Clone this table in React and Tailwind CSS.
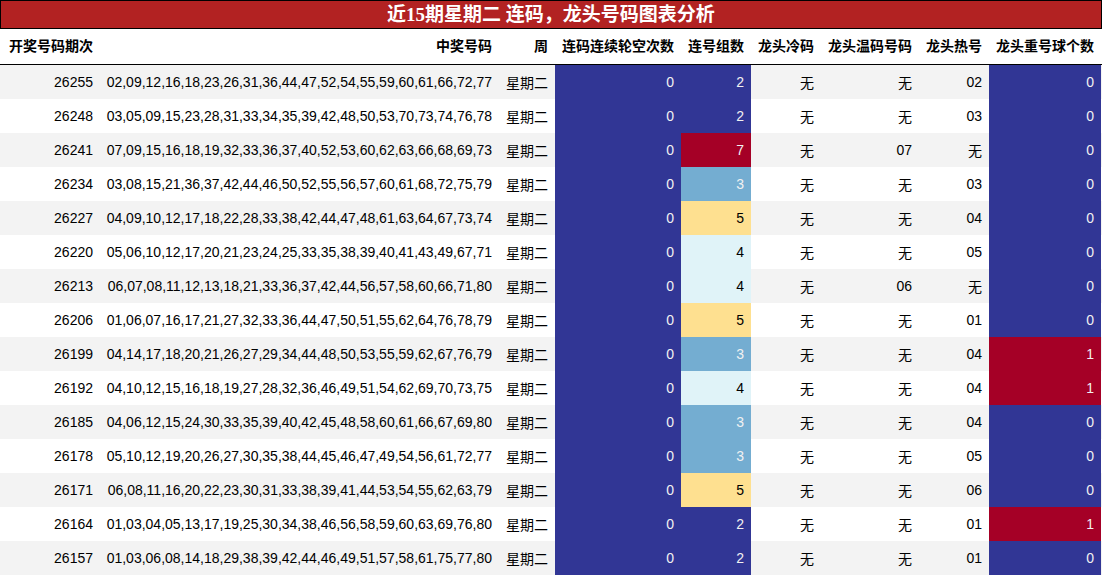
import React from "react";

const rows = [
  ["26255", "02,09,12,16,18,23,26,31,36,44,47,52,54,55,59,60,61,66,72,77", 0, 2, "无", "无", "02", 0],
  ["26248", "03,05,09,15,23,28,31,33,34,35,39,42,48,50,53,70,73,74,76,78", 0, 2, "无", "无", "03", 0],
  ["26241", "07,09,15,16,18,19,32,33,36,37,40,52,53,60,62,63,66,68,69,73", 0, 7, "无", "07", "无", 0],
  ["26234", "03,08,15,21,36,37,42,44,46,50,52,55,56,57,60,61,68,72,75,79", 0, 3, "无", "无", "03", 0],
  ["26227", "04,09,10,12,17,18,22,28,33,38,42,44,47,48,61,63,64,67,73,74", 0, 5, "无", "无", "04", 0],
  ["26220", "05,06,10,12,17,20,21,23,24,25,33,35,38,39,40,41,43,49,67,71", 0, 4, "无", "无", "05", 0],
  ["26213", "06,07,08,11,12,13,18,21,33,36,37,42,44,56,57,58,60,66,71,80", 0, 4, "无", "06", "无", 0],
  ["26206", "01,06,07,16,17,21,27,32,33,36,44,47,50,51,55,62,64,76,78,79", 0, 5, "无", "无", "01", 0],
  ["26199", "04,14,17,18,20,21,26,27,29,34,44,48,50,53,55,59,62,67,76,79", 0, 3, "无", "无", "04", 1],
  ["26192", "04,10,12,15,16,18,19,27,28,32,36,46,49,51,54,62,69,70,73,75", 0, 4, "无", "无", "04", 1],
  ["26185", "04,06,12,15,24,30,33,35,39,40,42,45,48,58,60,61,66,67,69,80", 0, 3, "无", "无", "04", 0],
  ["26178", "05,10,12,19,20,26,27,30,35,38,44,45,46,47,49,54,56,61,72,77", 0, 3, "无", "无", "05", 0],
  ["26171", "06,08,11,16,20,22,23,30,31,33,38,39,41,44,53,54,55,62,63,79", 0, 5, "无", "无", "06", 0],
  ["26164", "01,03,04,05,13,17,19,25,30,34,38,46,56,58,59,60,63,69,76,80", 0, 2, "无", "无", "01", 1],
  ["26157", "01,03,06,08,14,18,29,38,39,42,44,46,49,51,57,58,61,75,77,80", 0, 2, "无", "无", "01", 0],
];

const lianhaoStyle = {
  2: "bg-[#313695] text-[#f1f1f1]",
  3: "bg-[#74add1] text-[#f1f1f1]",
  4: "bg-[#e0f3f8] text-black",
  5: "bg-[#fee090] text-black",
  7: "bg-[#a50026] text-[#f1f1f1]",
};

const repeatStyle = {
  0: "bg-[#313695] text-[#f1f1f1]",
  1: "bg-[#a50026] text-[#f1f1f1]",
};

const grid =
  "grid grid-cols-[100px_399px_56px_126px_70px_70px_98px_70px_112px]";

const headers = [
  "开奖号码期次",
  "中奖号码",
  "周",
  "连码连续轮空次数",
  "连号组数",
  "龙头冷码",
  "龙头温码号码",
  "龙头热号",
  "龙头重号球个数",
];

function Cell({ children, className = "" }) {
  return (
    <div className={`flex items-center justify-end px-[7px] whitespace-nowrap ${className}`}>
      {children}
    </div>
  );
}

export default function App() {
  return (
    <div
      className="w-[1102px] h-[576px] overflow-hidden bg-white text-black"
      style={{ fontFamily: '"Liberation Sans", "Noto Sans CJK SC", sans-serif' }}
    >
      <div
        className="h-[29px] border border-black bg-[#b22222] flex items-center justify-center text-white font-bold text-[19px] leading-none"
        style={{ fontFamily: '"Liberation Serif", "Noto Sans CJK SC", serif' }}
      >
        近15期星期二 连码，龙头号码图表分析
      </div>
      <div className={`${grid} h-[36px] border-b border-black text-[14px] font-bold`}>
        {headers.map((h) => (
          <Cell key={h}>{h}</Cell>
        ))}
      </div>
      {rows.map((r, i) => (
        <div
          key={r[0]}
          className={`${grid} h-[34px] text-[14px] ${i % 2 === 0 ? "bg-[#f3f3f3]" : "bg-white"}`}
        >
          <Cell>{r[0]}</Cell>
          <Cell>{r[1]}</Cell>
          <Cell className="pt-[2px]">星期二</Cell>
          <Cell className="bg-[#313695] text-[#f1f1f1]">{r[2]}</Cell>
          <Cell className={lianhaoStyle[r[3]]}>{r[3]}</Cell>
          <Cell className="pt-[2px]">{r[4]}</Cell>
          <Cell className={r[5] === "无" ? "pt-[2px]" : ""}>{r[5]}</Cell>
          <Cell className={r[6] === "无" ? "pt-[2px]" : ""}>{r[6]}</Cell>
          <Cell className={repeatStyle[r[7]]}>{r[7]}</Cell>
        </div>
      ))}
    </div>
  );
}
